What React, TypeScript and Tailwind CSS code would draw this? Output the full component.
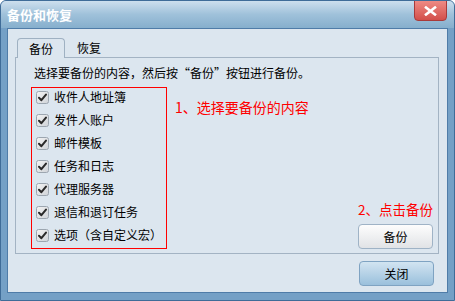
import React from 'react'

const items = ['收件人地址簿', '发件人账户', '邮件模板', '任务和日志', '代理服务器', '退信和退订任务', '选项（含自定义宏）']

function CheckBox() {
  return (
    <svg width="13" height="13" viewBox="0 0 13 13" className="shrink-0">
      <defs>
        <linearGradient id="cbg" x1="0" y1="0" x2="1" y2="1">
          <stop offset="0" stopColor="#f4f4f4" />
          <stop offset="1" stopColor="#cfd3d8" />
        </linearGradient>
      </defs>
      <rect x="0.5" y="0.5" width="12" height="12" rx="2" fill="url(#cbg)" stroke="#9ca6b0" />
      <path d="M3 6.8 L5.4 9.2 L10 3.6" fill="none" stroke="#2a2a2a" strokeWidth="2" strokeLinecap="round" strokeLinejoin="round" />
    </svg>
  )
}

export default function App() {
  return (
    <div
      className="w-[455px] h-[301px] flex flex-col rounded-t-[6px] border border-[#3f6c98] bg-[#74a0c6] text-black overflow-hidden"
      style={{ fontFamily: '"Noto Sans CJK SC", "Noto Sans", sans-serif' }}
    >
      {/* Title bar */}
      <div className="h-[27px] shrink-0 flex items-start justify-between bg-gradient-to-b from-[#cddfee] via-[#9fc1da] to-[#86afcd]">
        <span className="pl-[6px] pt-[5px] text-[13px] leading-[17px] font-bold text-white">备份和恢复</span>
        <div className="mr-[7px] w-[33px] h-[21px] -mt-px flex items-center justify-center rounded-b-[4px] border border-[#a83a3a] bg-gradient-to-b from-[#ee8a84] to-[#d24e4a]">
          <svg width="13" height="10" viewBox="0 0 13 10">
            <path d="M2 1.5 L11 8.5 M11 1.5 L2 8.5" stroke="#fff" strokeWidth="2.6" strokeLinecap="square" />
          </svg>
        </div>
      </div>

      {/* Client */}
      <div className="flex-1 mx-[6px] mb-[7px] flex flex-col border border-[#4f7ca8] bg-[#dce6ef] pl-[7px] pr-[8px] pt-[9px]">
        {/* Tabs */}
        <div className="flex pl-[2px] h-[19px] relative z-10">
          <div className="w-[48px] h-[20px] flex items-center justify-center rounded-t-[4px] border border-b-0 border-[#9fb1c2] bg-[#dce6ef] text-[12px] leading-none">
            备份
          </div>
          <div className="w-[48px] h-[19px] flex items-center justify-center text-[12px] leading-none">恢复</div>
        </div>

        {/* Panel */}
        <div className="h-[197px] flex flex-col border border-[#a3b3c3] pl-[15px] pr-[5px] pt-[7px] pb-[4px]">
          <p className="pl-[3px] text-[12px] leading-[16px]">选择要备份的内容，然后按“备份”按钮进行备份。</p>
          <div className="flex flex-1 mt-[6px]">
            <div className="w-[136px] flex flex-col gap-[7px] border border-[#ff0000] pl-[4px] pt-[1px] pb-[4px]">
              {items.map(label => (
                <div key={label} className="h-[16px] flex items-center gap-[5px] text-[12px] leading-none">
                  <CheckBox />
                  <span>{label}</span>
                </div>
              ))}
            </div>
            <div className="flex-1 pl-[8px] pt-[10px] text-[14px] leading-[20px] text-[#ff0000]">1、选择要备份的内容</div>
            <div className="w-[75px] flex flex-col items-start justify-end">
              <span className="whitespace-nowrap text-[13.5px] leading-[20px] text-[#ff0000]">2、点击备份</span>
              <button className="mt-[5px] w-[75px] h-[25px] rounded-[4px] border border-[#9fb3c6] bg-gradient-to-b from-[#fdfdfd] to-[#e1e3e6] text-[12px] leading-none">
                备份
              </button>
            </div>
          </div>
        </div>

        {/* Bottom */}
        <div className="flex justify-end pr-[5px] mt-[7px]">
          <button className="w-[75px] h-[25px] rounded-[4px] border border-[#7fa3c2] bg-gradient-to-b from-[#d2e4f1] to-[#9ac0dc] text-[12px] leading-none">
            关闭
          </button>
        </div>
      </div>
    </div>
  )
}
